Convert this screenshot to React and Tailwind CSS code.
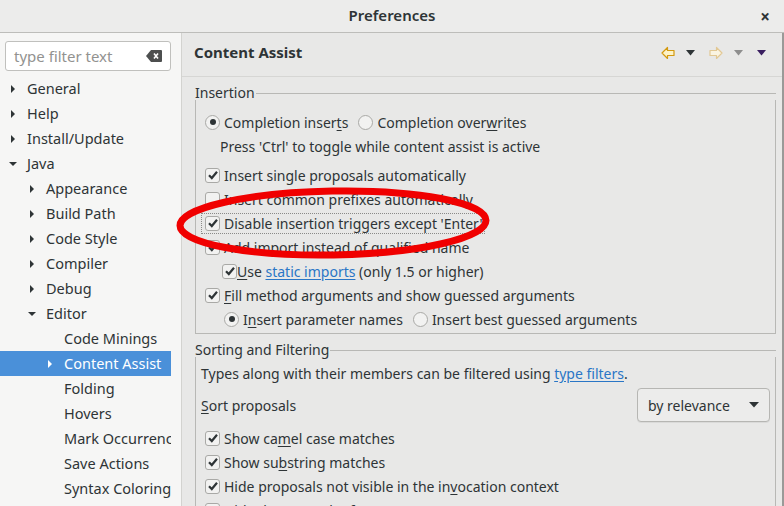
import React from 'react';

const font = { fontFamily: '"Noto Sans", "Open Sans", sans-serif' };

function Arrow({ open, white }) {
  const c = white ? '#ffffff' : '#2e3436';
  return (
    <svg width="8" height="10" viewBox="0 0 8 10" className="shrink-0">
      {open ? <path d="M0 3 L8 3 L4 7 Z" fill={c} /> : <path d="M2 1 L6 5 L2 9 Z" fill={c} />}
    </svg>
  );
}

function TreeRow({ level, label, arrow, open, selected }) {
  const pad = ['pl-[9px]', 'pl-[28px]', 'pl-[46px]'][level];
  return (
    <div className={`flex items-center h-[25px] overflow-hidden ${pad} ${selected ? 'bg-[#4a90d9] text-white' : ''}`}>
      <span className="w-[18px] shrink-0 flex">{arrow && <Arrow open={open} white={selected} />}</span>
      <span className="whitespace-nowrap shrink-0">{label}</span>
    </div>
  );
}

function Check({ checked = true }) {
  return (
    <span className="w-[15px] h-[15px] rounded-[3px] border border-[#a9a9a6] bg-[#f2f2f1] flex items-center justify-center shrink-0">
      {checked && (
        <svg width="12" height="12" viewBox="0 0 12 12">
          <path d="M2 6.2 L4.8 9 L10 2.8" stroke="#2e3436" strokeWidth="2.2" fill="none" />
        </svg>
      )}
    </span>
  );
}

function Radio({ checked }) {
  return (
    <span className="w-[15px] h-[15px] rounded-full border border-[#a9a9a6] bg-[#f2f2f1] flex items-center justify-center shrink-0">
      {checked && <span className="w-[6px] h-[6px] rounded-full bg-[#2e3436]" />}
    </span>
  );
}

const tree = [
  [0, 'General', true, false],
  [0, 'Help', true, false],
  [0, 'Install/Update', true, false],
  [0, 'Java', true, true],
  [1, 'Appearance', true, false],
  [1, 'Build Path', true, false],
  [1, 'Code Style', true, false],
  [1, 'Compiler', true, false],
  [1, 'Debug', true, false],
  [1, 'Editor', true, true],
  [2, 'Code Minings', false, false],
  [2, 'Content Assist', true, false, true],
  [2, 'Folding', false, false],
  [2, 'Hovers', false, false],
  [2, 'Mark Occurrences', false, false],
  [2, 'Save Actions', false, false],
  [2, 'Syntax Coloring', false, false],
];

function U({ children }) {
  return <span className="underline underline-offset-2">{children}</span>;
}

export default function App() {
  return (
    <div className="w-[784px] h-[506px] overflow-hidden flex flex-col text-[14px] text-[#2e3436] bg-[#e8e8e7] relative" style={font}>
      {/* title bar */}
      <div className="h-[33px] shrink-0 flex items-center justify-center relative bg-[#ececeb] border-b border-[#bdbdba] pb-[2px]">
        <span className="text-[15px] font-semibold">Preferences</span>
        <span className="absolute right-[14px] top-[4px] text-[17px] font-bold">×</span>
      </div>

      <div className="flex flex-1 min-h-0">
        {/* left tree */}
        <div className="w-[182px] shrink-0 bg-[#f6f6f5] border-r border-[#d3d3d0] pt-[8px] overflow-hidden">
          <div className="mx-[5px] h-[30px] w-[166px] rounded-[3px] border border-[#c0c0bd] bg-white flex items-center pl-[8px] pr-[8px] justify-between">
            <span className="text-[15px] text-[#929290]">type filter text</span>
            <svg width="16" height="12" viewBox="0 0 16 12">
              <path d="M5 0 H15 A1 1 0 0 1 16 1 V11 A1 1 0 0 1 15 12 H5 L0 6 Z" fill="#4d4f4f" />
              <path d="M8 3.5 L12 8.5 M12 3.5 L8 8.5" stroke="#ffffff" strokeWidth="1.6" />
            </svg>
          </div>
          <div className="mt-[5px] w-[171px] text-[14.5px] overflow-hidden">
            {tree.map(([lvl, label, arrow, open, sel]) => (
              <TreeRow key={label} level={lvl} label={label} arrow={arrow} open={open} selected={sel} />
            ))}
          </div>
        </div>

        {/* right panel */}
        <div className="flex-1 flex flex-col min-w-0 border-r-2 border-[#9a9a98]">
          <div className="h-[44px] shrink-0 flex items-center pl-[12px] pr-[16px] pb-[4px] border-b border-[#d6d6d4]">
            <span className="text-[15px] font-bold flex-1">Content Assist</span>
            <div className="flex items-center gap-[11px]">
              <svg width="14" height="14" viewBox="0 0 14 14">
                <path d="M1 7 L6.5 1.5 V4.5 H13 V9.5 H6.5 V12.5 Z" fill="#fdf3c8" stroke="#d49a10" strokeWidth="1.2" strokeLinejoin="round" />
              </svg>
              <svg width="9" height="6" viewBox="0 0 9 6"><path d="M0 0 H9 L4.5 5.5 Z" fill="#2e3436" /></svg>
              <svg width="14" height="14" viewBox="0 0 14 14" className="ml-[3px]">
                <path d="M13 7 L7.5 1.5 V4.5 H1 V9.5 H7.5 V12.5 Z" fill="#faf4e2" stroke="#e2c894" strokeWidth="1.2" strokeLinejoin="round" />
              </svg>
              <svg width="9" height="6" viewBox="0 0 9 6"><path d="M0 0 H9 L4.5 5.5 Z" fill="#8e8e8e" /></svg>
              <svg width="9" height="6" viewBox="0 0 9 6" className="ml-[3px]"><path d="M0 0 H9 L4.5 5.5 Z" fill="#3a1f60" /></svg>
            </div>
          </div>

          <div className="pl-[13px] pr-[6px] pt-[7px]">
            {/* Insertion group */}
            <div className="flex items-center h-[16px]">
              <span className="pr-[1px]">Insertion</span>
              <span className="flex-1 border-t border-[#b8b8b5] mt-[2px]" />
            </div>
            <div className="border-x border-b border-[#b8b8b5] h-[234px] pt-[10px]">
              <div className="h-[24px] flex items-center pl-[9px] gap-[4px]">
                <Radio checked />
                <span>Completion inser<U>t</U>s</span>
                <span className="ml-[6px]"><Radio /></span>
                <span>Completion over<U>w</U>rites</span>
              </div>
              <div className="h-[24px] flex items-center pl-[24px]">Press 'Ctrl' to toggle while content assist is active</div>
              <div className="h-[5px]" />
              <div className="h-[24px] flex items-center pl-[9px] gap-[4px]">
                <Check />
                <span>Insert single proposals automatically</span>
              </div>
              <div className="h-[24px] flex items-center pl-[9px] gap-[4px]">
                <Check checked={false} />
                <span>Insert common prefixes automatically</span>
              </div>
              <div className="h-[24px] flex items-center pl-[5px]">
                <div className="flex items-center gap-[4px] border border-dotted border-[#8a8a88] pl-[3px] pr-[1px] h-[21px]">
                  <Check />
                  <span>Disable insertion triggers except 'Enter'</span>
                </div>
              </div>
              <div className="h-[24px] flex items-center pl-[9px] gap-[4px]">
                <Check />
                <span>Add import instead of qualified name</span>
              </div>
              <div className="h-[24px] flex items-center pl-[26px]">
                <Check />
                <span><U>U</U>se <span className="text-[#2a76c6] underline underline-offset-2">static imports</span> (only 1.5 or higher)</span>
              </div>
              <div className="h-[24px] flex items-center pl-[9px] gap-[4px]">
                <Check />
                <span><U>F</U>ill method arguments and show guessed arguments</span>
              </div>
              <div className="h-[24px] flex items-center pl-[28px] gap-[4px]">
                <Radio checked />
                <span>I<U>n</U>sert parameter names</span>
                <span className="ml-[6px]"><Radio /></span>
                <span>Insert best guessed arguments</span>
              </div>
            </div>

            {/* Sorting group */}
            <div className="flex items-center h-[16px] mt-[7px]">
              <span className="pr-[1px]">Sorting and Filtering</span>
              <span className="flex-1 border-t border-[#b8b8b5] mt-[2px]" />
            </div>
            <div className="border-x border-[#b8b8b5] h-[200px] pt-[4px]">
              <div className="h-[24px] flex items-center pl-[5px]">
                <span>Types along with their members can be filtered using <span className="text-[#2a76c6] underline underline-offset-2">type filters</span>.</span>
              </div>
              <div className="h-[34px] flex items-center pl-[5px] pr-[5px] mt-[3px]">
                <span className="flex-1"><U>S</U>ort proposals</span>
                <div className="w-[133px] h-[34px] rounded-[4px] border border-[#b6b6b3] bg-[#ececeb] flex items-center justify-between pl-[10px] pr-[10px] shadow-[0_1px_0_rgba(0,0,0,0.06)]">
                  <span>by relevance</span>
                  <svg width="10" height="6" viewBox="0 0 10 6"><path d="M0 0 H10 L5 5.5 Z" fill="#2e3436" /></svg>
                </div>
              </div>
              <div className="h-[4px]" />
              <div className="h-[24px] flex items-center pl-[9px] gap-[4px]">
                <Check />
                <span>Show ca<U>m</U>el case matches</span>
              </div>
              <div className="h-[24px] flex items-center pl-[9px] gap-[4px]">
                <Check />
                <span>Show su<U>b</U>string matches</span>
              </div>
              <div className="h-[24px] flex items-center pl-[9px] gap-[4px]">
                <Check />
                <span>Hide proposals not visible in the in<U>v</U>ocation context</span>
              </div>
              <div className="h-[24px] flex items-center pl-[9px] gap-[4px]">
                <Check checked={false} />
                <span>Hide deprecated references</span>
              </div>
            </div>
          </div>
        </div>
      </div>

      {/* red annotation ellipse */}
      <svg className="absolute left-0 top-0 pointer-events-none" width="784" height="506">
        <ellipse cx="333" cy="223" rx="153" ry="32" fill="none" stroke="#f00000" strokeWidth="7" transform="rotate(-1 333 223)" />
      </svg>
    </div>
  );
}
